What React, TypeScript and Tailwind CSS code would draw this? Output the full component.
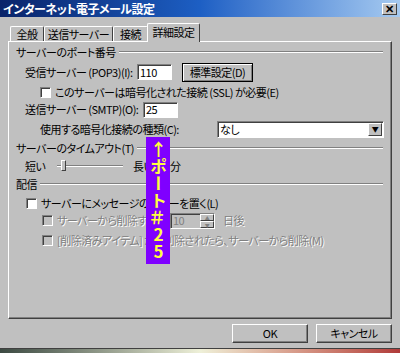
import React from 'react';

const jp = "font-['Noto_Sans_CJK_JP',sans-serif] [font-feature-settings:'palt']";

const Check = ({ disabled }: { disabled?: boolean }) => (
  <span
    className={`inline-block h-[11px] w-[11px] flex-none border border-[#808080] border-b-white border-r-white shadow-[inset_1px_1px_#404040] ${
      disabled ? 'bg-[#c0c0c0]' : 'bg-white'
    }`}
  />
);

const GroupHeader = ({ label }: { label: string }) => (
  <div className="flex h-[14px] items-center gap-[3px] pr-[8px]">
    <span className="leading-none">{label}</span>
    <div className="h-[2px] flex-1 border-t border-b border-t-[#808080] border-b-white" />
  </div>
);

const App: React.FC = () => {
  return (
    <div className={`relative flex h-[353px] w-[400px] flex-col overflow-hidden whitespace-nowrap bg-[#c0c0c0] text-[11px] tracking-[-0.5px] text-black ${jp}`}>
      {/* Title bar */}
      <div className="flex h-[17px] flex-none items-center justify-between bg-linear-to-r from-[#0a246a] via-[#1d5fc4] to-[#a6caf0] pl-[3px] pr-[3px]">
        <span className="text-[12px] font-bold leading-none text-white">インターネット電子メール設定</span>
        <span className="flex h-[12px] w-[15px] items-center justify-center border border-white border-b-[#404040] border-r-[#404040] bg-[#c0c0c0] text-[11px] font-bold leading-none">
          ✕
        </span>
      </div>

      {/* Tabs */}
      <div className="relative z-10 mt-[6px] flex h-[18px] flex-none items-end pl-[10px]">
        <div className="flex h-[15px] w-[34px] items-center justify-center rounded-t-[2px] border border-b-0 border-white border-r-[#404040]">全般</div>
        <div className="flex h-[15px] w-[69px] items-center justify-center rounded-t-[2px] border border-b-0 border-white border-r-[#404040]">送信サーバー</div>
        <div className="flex h-[15px] w-[35px] items-center justify-center rounded-t-[2px] border border-b-0 border-white border-r-[#404040]">接続</div>
        <div className="-mb-[1px] -ml-[1px] flex h-[19px] w-[53px] items-center justify-center rounded-t-[2px] border border-b-0 border-white border-r-[#404040] bg-[#c0c0c0] pb-[2px]">詳細設定</div>
      </div>

      {/* Tab panel */}
      <div className="mx-[8px] flex h-[278px] flex-none flex-col border border-white border-b-[#404040] border-r-[#404040] pl-[7px] pt-[3px] shadow-[inset_-1px_-1px_#808080]">
        <GroupHeader label="サーバーのポート番号" />

        <div className="mt-[3px] flex h-[20px] items-center pl-[9px]">
          <span className="w-[112px] flex-none">受信サーバー (POP3)(I):</span>
          <span className="flex h-[16px] w-[35px] flex-none items-center border border-[#808080] border-b-white border-r-white bg-white pl-[2px] shadow-[inset_1px_1px_#404040]">110</span>
          <span className="ml-[10px] flex h-[19px] w-[71px] flex-none items-center justify-center border border-black bg-[#c0c0c0] shadow-[inset_1px_1px_#ffffff,inset_-1px_-1px_#808080]">標準設定(D)</span>
        </div>

        <div className="mt-[1px] flex h-[18px] items-center gap-[4px] pl-[24px]">
          <Check />
          <span>このサーバーは暗号化された接続 (SSL) が必要(E)</span>
        </div>

        <div className="flex h-[17px] items-center pl-[9px]">
          <span className="w-[118px] flex-none">送信サーバー (SMTP)(O):</span>
          <span className="flex h-[16px] w-[35px] flex-none items-center border border-[#808080] border-b-white border-r-white bg-white pl-[2px] shadow-[inset_1px_1px_#404040]">25</span>
        </div>

        <div className="mt-[2px] flex h-[18px] items-center pl-[24px]">
          <span className="w-[177px] flex-none">使用する暗号化接続の種類(C):</span>
          <div className="flex h-[17px] w-[167px] flex-none items-center justify-between border border-[#808080] border-b-white border-r-white bg-white pl-[2px] pr-[1px] shadow-[inset_1px_1px_#404040]">
            <span>なし</span>
            <span className="flex h-[13px] w-[14px] items-center justify-center border border-white border-b-[#404040] border-r-[#404040] bg-[#c0c0c0] text-[7px] leading-none">▼</span>
          </div>
        </div>

        <div className="mt-[3px]">
          <GroupHeader label="サーバーのタイムアウト(T)" />
        </div>

        <div className="mt-[2px] flex h-[18px] items-center pl-[9px]">
          <span className="w-[32px] flex-none">短い</span>
          <div className="relative flex h-[12px] w-[66px] flex-none items-center">
            <div className="h-[2px] w-full border-t border-b border-t-[#808080] border-b-white bg-[#404040]" />
            <span className="absolute left-[4px] top-0 h-[11px] w-[5px] border border-white border-b-[#404040] border-r-[#404040] bg-[#c0c0c0]" />
          </div>
          <span className="ml-[10px] w-[37px] flex-none">長い</span>
          <span>分</span>
        </div>

        <div className="mt-[2px]">
          <GroupHeader label="配信" />
        </div>

        <div className="mt-[3px] flex h-[18px] items-center gap-[4px] pl-[10px]">
          <Check />
          <span>サーバーにメッセージのコピーを置く(L)</span>
        </div>

        <div className="flex h-[17px] items-center pl-[26px] text-[#808080]">
          <Check disabled />
          <span className="ml-[4px] w-[113px] flex-none [text-shadow:1px_1px_#ffffff]">サーバーから削除する</span>
          <div className="flex h-[16px] w-[45px] flex-none items-center justify-between border border-[#808080] border-b-white border-r-white bg-[#c0c0c0] pl-[2px] shadow-[inset_1px_1px_#404040]">
            <span>10</span>
            <div className="flex h-[14px] w-[14px] flex-col">
              <span className="flex h-[7px] items-center justify-center border border-white border-b-[#404040] border-r-[#404040] text-[5px] leading-none">▲</span>
              <span className="flex h-[7px] items-center justify-center border border-white border-b-[#404040] border-r-[#404040] text-[5px] leading-none">▼</span>
            </div>
          </div>
          <span className="ml-[8px] [text-shadow:1px_1px_#ffffff]">日後</span>
        </div>

        <div className="mt-[2px] flex h-[18px] items-center gap-[4px] pl-[26px] text-[#808080]">
          <Check disabled />
          <span className="[text-shadow:1px_1px_#ffffff]">[削除済みアイテム] から削除されたら、サーバーから削除(M)</span>
        </div>
      </div>

      {/* Buttons */}
      <div className="mt-[5px] flex flex-none justify-end gap-[8px] pr-[8px]">
        <span className="flex h-[19px] w-[76px] items-center justify-center border border-white border-b-[#404040] border-r-[#404040] shadow-[inset_-1px_-1px_#808080]">OK</span>
        <span className="flex h-[19px] w-[76px] items-center justify-center border border-white border-b-[#404040] border-r-[#404040] shadow-[inset_-1px_-1px_#808080]">キャンセル</span>
      </div>

      {/* Desktop behind the window */}
      <div className="mt-auto h-[5px] flex-none border-t border-t-[#404040] bg-linear-to-r from-[#3c4a42] via-[#eef0d8] to-[#b03a3a]" />

      {/* Overlay label */}
      <div className="absolute left-[146px] top-[137px] flex h-[127px] w-[24px] items-center justify-center overflow-hidden bg-[#7f00ff]">
        <span className="text-[17px] font-bold leading-[24px] tracking-normal text-[#ffff40] [text-orientation:upright] [writing-mode:vertical-rl]">↑ポート＃25</span>
      </div>
    </div>
  );
};

export default App;
